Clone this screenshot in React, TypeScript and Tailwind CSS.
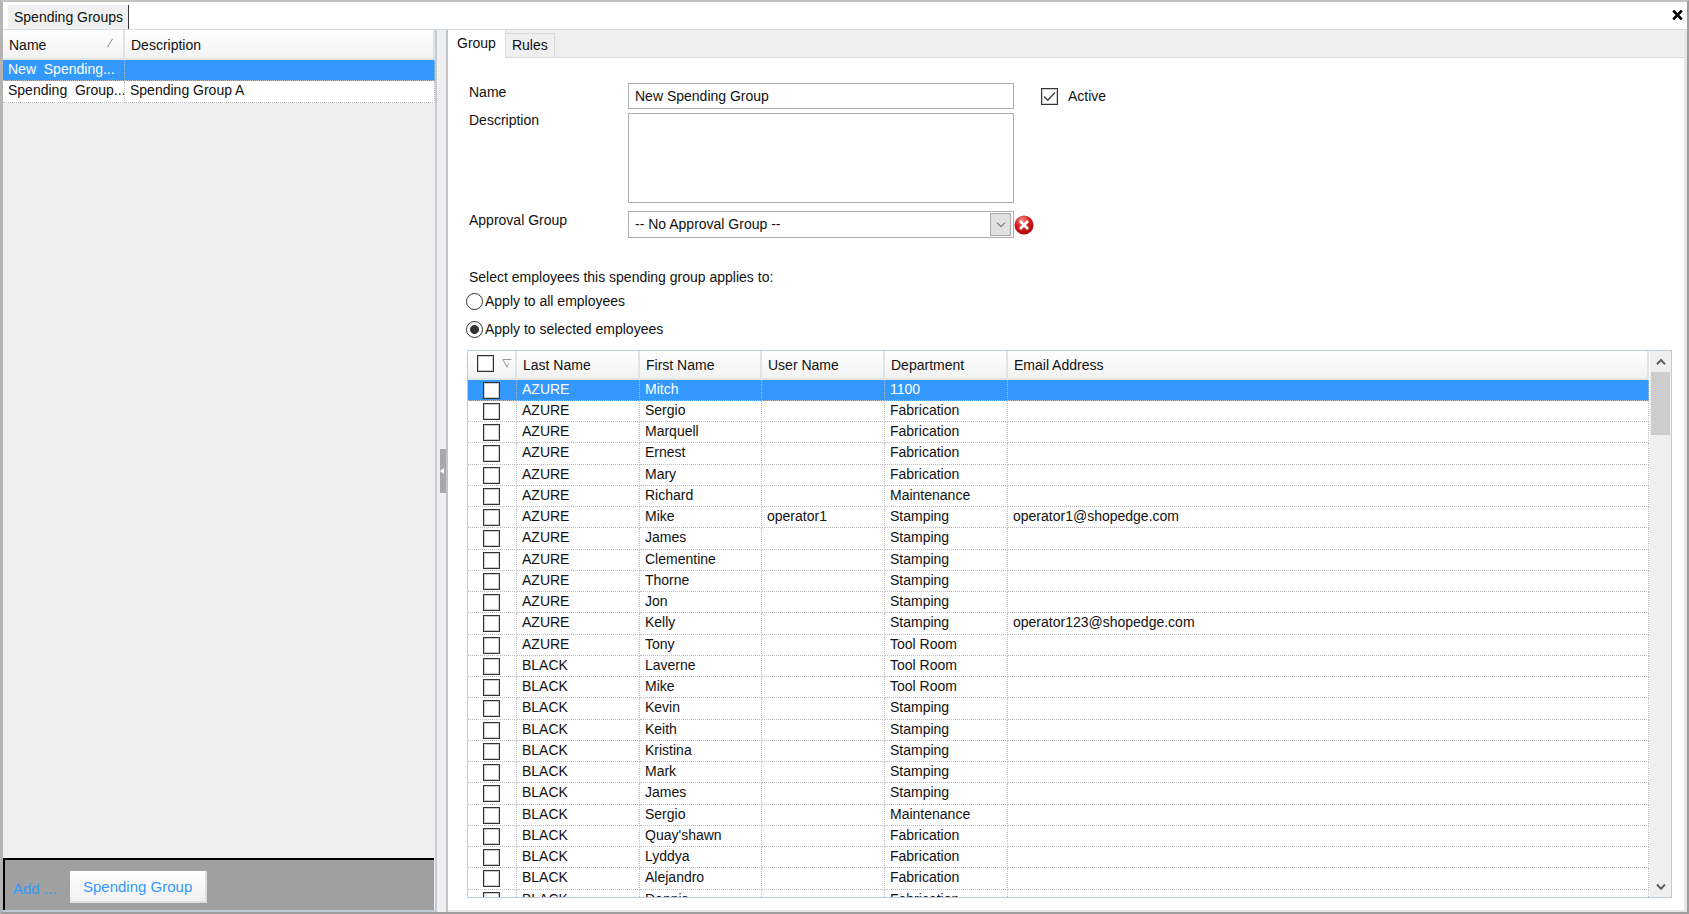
import React, { useState } from "react";

type Employee = {
  last: string;
  first: string;
  user?: string;
  dept: string;
  email?: string;
};

const employees: Employee[] = [
  { last: "AZURE", first: "Mitch", dept: "1100" },
  { last: "AZURE", first: "Sergio", dept: "Fabrication" },
  { last: "AZURE", first: "Marquell", dept: "Fabrication" },
  { last: "AZURE", first: "Ernest", dept: "Fabrication" },
  { last: "AZURE", first: "Mary", dept: "Fabrication" },
  { last: "AZURE", first: "Richard", dept: "Maintenance" },
  { last: "AZURE", first: "Mike", user: "operator1", dept: "Stamping", email: "operator1@shopedge.com" },
  { last: "AZURE", first: "James", dept: "Stamping" },
  { last: "AZURE", first: "Clementine", dept: "Stamping" },
  { last: "AZURE", first: "Thorne", dept: "Stamping" },
  { last: "AZURE", first: "Jon", dept: "Stamping" },
  { last: "AZURE", first: "Kelly", dept: "Stamping", email: "operator123@shopedge.com" },
  { last: "AZURE", first: "Tony", dept: "Tool Room" },
  { last: "BLACK", first: "Laverne", dept: "Tool Room" },
  { last: "BLACK", first: "Mike", dept: "Tool Room" },
  { last: "BLACK", first: "Kevin", dept: "Stamping" },
  { last: "BLACK", first: "Keith", dept: "Stamping" },
  { last: "BLACK", first: "Kristina", dept: "Stamping" },
  { last: "BLACK", first: "Mark", dept: "Stamping" },
  { last: "BLACK", first: "James", dept: "Stamping" },
  { last: "BLACK", first: "Sergio", dept: "Maintenance" },
  { last: "BLACK", first: "Quay'shawn", dept: "Fabrication" },
  { last: "BLACK", first: "Lyddya", dept: "Fabrication" },
  { last: "BLACK", first: "Alejandro", dept: "Fabrication" },
  { last: "BLACK", first: "Dennis", dept: "Fabrication" },
];

const headCell =
  "border-r-2 border-b-2 border-r-[#dfe3e4] border-b-[#e2e5e5] bg-linear-to-b from-white to-[#f2f2f2] p-0 pt-[2px] pl-[6px] text-left font-normal";
const bodyCell =
  "overflow-hidden whitespace-pre border-r border-b border-dotted border-[#bdbdbd] p-0 pl-[5px] align-top leading-[18px]";
const tickBox =
  "block size-[17px] shrink-0 appearance-none border border-[#333333] bg-white shadow-[inset_0_0_0_1px_#cccccc]";
const field = "border border-[#abadb3] bg-white px-[6px] outline-none";

function Chevron({ down = false, className }: { down?: boolean; className: string }) {
  return (
    <svg viewBox="0 0 10 8" className={className} fill="none" stroke="currentColor" aria-hidden="true">
      <path d={down ? "M1 1.5 5 5.8 9 1.5" : "M1 6.3 5 2 9 6.3"} />
    </svg>
  );
}

function GroupList() {
  return (
    <aside className="flex w-[434px] shrink-0 flex-col border-r-2 border-b-2 border-[#c3ccd6] bg-[#efefef]">
      <table className="w-full table-fixed border-separate border-spacing-0">
        <colgroup>
          <col className="w-[122px]" />
          <col />
        </colgroup>
        <thead>
          <tr className="h-[30px]">
            <th className={headCell}>
              <span className="flex items-center justify-between pr-[10px]">
                Name
                <svg viewBox="0 0 6 8" className="mb-1 h-2 w-[6px]" stroke="#8a8a8a" aria-hidden="true">
                  <path d="M0.5 8 5.5 0" />
                </svg>
              </span>
            </th>
            <th className={headCell}>Description</th>
          </tr>
        </thead>
        <tbody>
          <tr className="h-[21px] bg-[#3399ff] text-white">
            <td className={bodyCell}>New  Spending...</td>
            <td className={bodyCell}></td>
          </tr>
          <tr className="h-[22px] bg-white">
            <td className={bodyCell}>Spending  Group...</td>
            <td className={bodyCell}>Spending Group A</td>
          </tr>
        </tbody>
      </table>
      <div className="mt-auto mr-[1px] flex h-[52px] items-center border-t-2 border-l-2 border-black bg-[#a0a0a0] pl-2 text-[15px] text-[#3399ff]">
        <span className="w-[57px] pt-2">Add ...</span>
        <button
          type="button"
          className="mt-1 h-[32px] border-r-2 border-b-2 border-[#dde1e0] bg-linear-to-b from-white to-[#f0f0f0] px-[13px] pt-[3px]"
        >
          Spending Group
        </button>
      </div>
    </aside>
  );
}

function EmployeeTable() {
  return (
    <div className="mr-[12px] ml-[19px] flex min-h-0 flex-1 overflow-hidden border border-[#b9cddd]">
      <div className="min-w-0 flex-1 overflow-hidden">
        <table className="w-full table-fixed border-separate border-spacing-0">
          <colgroup>
            <col className="w-[49px]" />
            <col className="w-[123px]" />
            <col className="w-[122px]" />
            <col className="w-[123px]" />
            <col className="w-[123px]" />
            <col />
          </colgroup>
          <thead>
            <tr className="h-[29px]">
              <th className={headCell}>
                <span className="flex items-center gap-[8px] pb-[5px] pl-[3px]">
                  <input type="checkbox" aria-label="Select all employees" className={tickBox} />
                  <svg viewBox="0 0 10 9" className="h-[9px] w-[10px]" fill="none" stroke="#999999" aria-hidden="true">
                    <path d="M9.5 0.5H0.8L5 8.3 6.6 4.5" />
                  </svg>
                </span>
              </th>
              <th className={headCell}>Last Name</th>
              <th className={headCell}>First Name</th>
              <th className={headCell}>User Name</th>
              <th className={headCell}>Department</th>
              <th className={headCell}>Email Address</th>
            </tr>
          </thead>
          <tbody>
            {employees.map((e, i) => (
              <tr
                key={i}
                className={
                  i === 0
                    ? "h-[21px] bg-[#3399ff] text-white"
                    : "h-[21px] bg-white nth-[4n]:h-[22px]"
                }
              >
                <td className="border-r border-b border-dotted border-[#bdbdbd] p-0 pt-[2px] pl-[15px] align-top">
                  <input type="checkbox" aria-label={`${e.first} ${e.last}`} className={tickBox} />
                </td>
                <td className={bodyCell}>{e.last}</td>
                <td className={bodyCell}>{e.first}</td>
                <td className={bodyCell}>{e.user}</td>
                <td className={bodyCell}>{e.dept}</td>
                <td className={bodyCell}>{e.email}</td>
              </tr>
            ))}
          </tbody>
        </table>
      </div>
      <div className="ml-[1px] flex w-[21px] shrink-0 flex-col bg-[#efefef] px-[1px] text-[#606060]">
        <button type="button" aria-label="Scroll up" className="flex h-[21px] items-center justify-center">
          <Chevron className="h-2 w-[10px] stroke-2" />
        </button>
        <div className="h-[63px] bg-[#cdcdcd]" />
        <button type="button" aria-label="Scroll down" className="mt-auto flex h-[20px] items-center justify-center">
          <Chevron down className="h-2 w-[10px] stroke-2" />
        </button>
      </div>
    </div>
  );
}

export default function App() {
  const [active, setActive] = useState(true);
  const [scope, setScope] = useState("selected");
  const radio =
    "m-0 size-[17px] appearance-none rounded-full border border-[#333333] bg-white checked:bg-[radial-gradient(circle,#333333_0_4px,transparent_5px)]";

  return (
    <div className="flex h-screen flex-col border-t-2 border-r-2 border-b-2 border-l-3 border-t-[#c3c2bc] border-r-[#9c9c9c] border-b-[#9c9c9c] border-l-[#b4b4b4] bg-white font-['Liberation_Sans',Arial,sans-serif] text-[14px] text-[#111111]">
      <header className="flex h-[27px] shrink-0 items-end justify-between pr-1 pl-[5px]">
        <h1 className="h-[24px] border-r border-[#333333] bg-[#f0f0f0] pr-[5px] pl-[6px] leading-[24px]">
          Spending Groups
        </h1>
        <button type="button" aria-label="Close" className="mb-[9px]">
          <svg viewBox="0 0 11 10" className="h-[10px] w-[11px]" stroke="#000000" strokeWidth="2.6" aria-hidden="true">
            <path d="M1.2 0.5 9.8 9.5M9.8 0.5 1.2 9.5" />
          </svg>
        </button>
      </header>

      <div className="flex min-h-0 flex-1 border-t border-[#d3dce3]">
        <GroupList />

        <div className="flex w-[11px] shrink-0 flex-col items-end justify-center border-r-2 border-[#c4c4c4] bg-[#f0f0f0]">
          <button
            type="button"
            aria-label="Collapse list"
            className="flex h-[44px] w-[6px] items-center bg-[#a8a8a8]"
          >
            <svg viewBox="0 0 4 6" className="h-[6px] w-1" fill="#ffffff" aria-hidden="true">
              <path d="M4 0V6L0 3Z" />
            </svg>
          </button>
        </div>

        <main className="flex min-w-0 flex-1 flex-col border-r-3 border-b-2 border-[#e6e6e6] pb-[12px]">
          <div role="tablist" className="flex h-[28px] shrink-0 items-end bg-[#efefef] shadow-[inset_0_-1px_0_#d9d9d9]">
            <button type="button" role="tab" aria-selected="true" className="h-[28px] border-r border-[#dcdcdc] bg-white px-[9px] pb-[2px]">
              Group
            </button>
            <button type="button" role="tab" aria-selected="false" className="h-[25px] border-t border-r border-b border-[#d9d9d9] px-[6px]">
              Rules
            </button>
          </div>

          <form className="grid grid-cols-[159px_386px_1fr] gap-y-[4px] pt-[25px] pl-[21px]">
            <label htmlFor="name" className="leading-[18px]">Name</label>
            <input id="name" defaultValue="New Spending Group" className={`${field} h-[26px]`} />
            <label className="flex items-center gap-[10px] pl-[27px]">
              <span className="relative block size-[17px]">
                <input type="checkbox" checked={active} onChange={() => setActive(!active)} className={tickBox} />
                {active && (
                  <svg viewBox="0 0 17 17" className="pointer-events-none absolute inset-0 size-[17px]" fill="none" stroke="#444444" strokeWidth="1.5" aria-hidden="true">
                    <path d="M3 8.5 6.8 12.2 14 4.5" />
                  </svg>
                )}
              </span>
              Active
            </label>

            <label htmlFor="description" className="leading-[14px]">Description</label>
            <textarea id="description" className={`${field} mb-1 h-[90px] resize-none`} />
            <span />

            <label htmlFor="approval" className="leading-[18px]">Approval Group</label>
            <span className="relative block">
              <select id="approval" className={`${field} h-[27px] w-full appearance-none`}>
                <option>-- No Approval Group --</option>
              </select>
              <span className="pointer-events-none absolute inset-y-[2px] right-[3px] flex w-[21px] items-center justify-center border border-[#a9a9a9] bg-[#e1e1e1] text-[#444444]">
                <Chevron down className="h-2 w-[10px]" />
              </span>
            </span>
            <button type="button" aria-label="Clear approval group" className="self-center justify-self-start">
              <svg viewBox="0 0 20 20" className="size-[20px]" aria-hidden="true">
                <defs>
                  <radialGradient id="clear" cx="40%" cy="25%" r="80%">
                    <stop offset="0" stopColor="#f08a86" />
                    <stop offset="0.5" stopColor="#d8191c" />
                    <stop offset="1" stopColor="#a00408" />
                  </radialGradient>
                </defs>
                <circle cx="10" cy="10" r="9.5" fill="url(#clear)" />
                <path d="M6 6 14 14M14 6 6 14" stroke="#ffffff" strokeWidth="2.8" />
              </svg>
            </button>
          </form>

          <fieldset aria-label="Employees" className="flex flex-col pt-[29px] pb-[11px] pl-[18px]">
            <p className="pl-[3px] leading-[20px]">Select employees this spending group applies to:</p>
            <label className="mt-[4px] flex h-[20px] items-center gap-[2px]">
              <input type="radio" name="scope" checked={scope === "all"} onChange={() => setScope("all")} className={radio} />
              Apply to all employees
            </label>
            <label className="mt-[8px] flex h-[20px] items-center gap-[2px]">
              <input type="radio" name="scope" checked={scope === "selected"} onChange={() => setScope("selected")} className={radio} />
              Apply to selected employees
            </label>
          </fieldset>

          <EmployeeTable />
        </main>
      </div>
    </div>
  );
}
